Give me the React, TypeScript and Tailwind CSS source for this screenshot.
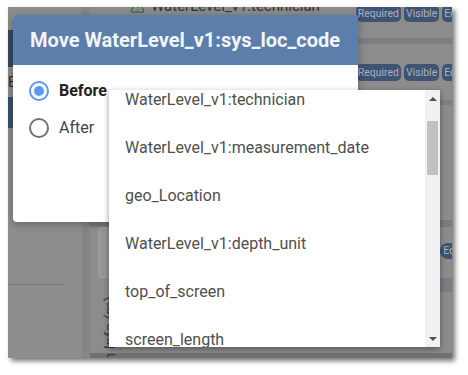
import { TriangleAlert } from "lucide-react";

const items = [
  "WaterLevel_v1:technician",
  "WaterLevel_v1:measurement_date",
  "geo_Location",
  "WaterLevel_v1:depth_unit",
  "top_of_screen",
  "screen_length",
];

function Badges() {
  return (
    <div className="-mr-[12px] flex gap-[3px] text-[10.5px] text-[#a6b2c2]">
      <span className="flex h-[17px] items-center rounded-[5px] bg-[#3f5473] px-[2px]">Required</span>
      <span className="flex h-[17px] items-center rounded-[5px] bg-[#3f5473] px-[2px]">Visible</span>
      <span className="flex h-[17px] items-center rounded-l-[5px] bg-[#3f5473] px-[2px]">Edit</span>
    </div>
  );
}

function Radio({ checked, label }: { checked?: boolean; label: string }) {
  return (
    <div className="flex items-center gap-[10px]">
      <span
        className={
          checked
            ? "flex h-[20px] w-[20px] items-center justify-center rounded-full border-2 border-[#5b97f5]"
            : "h-[20px] w-[20px] rounded-full border-2 border-[#737373]"
        }
      >
        {checked && <span className="h-[10px] w-[10px] rounded-full bg-[#5b97f5]" />}
      </span>
      <span className={checked ? "text-[16px] font-bold text-[#222]" : "text-[16px] text-[#444]"}>
        {label}
      </span>
    </div>
  );
}

export default function App() {
  return (
    <div className="h-[375px] w-[468px] bg-white pl-[8px] pt-[7px] font-['Roboto',sans-serif]">
      <div className="relative h-[351px] w-[444px] overflow-hidden bg-[#8c8c8c] shadow-[3px_3px_5px_rgba(0,0,0,0.55)]">
        {/* app underneath the overlay */}
        <div className="flex h-full">
          <div className="flex w-[74px] flex-col bg-[#8d8d8d]">
            <div className="h-[23px]" />
            <div className="h-[37px] bg-[#344862]" />
            <div className="flex h-[30px] items-center text-[14px] text-[#2c2c2c]">E</div>
            <div className="h-[31px] bg-[#3a4f6b]" />
            <div className="h-[156px]" />
            <div className="h-px w-[56px] bg-[#7a7a7a]" />
          </div>
          <div className="w-[8px] bg-[#858585]" />
          <div className="flex flex-1 flex-col">
            <div className="flex h-[31px] items-start">
              <div className="-mt-[12px] ml-[40px] flex items-center gap-[6px] text-[15px] text-[#333]">
                <TriangleAlert size={15} className="text-[#2e6a47]" />
                <span>WaterLevel_v1:technician</span>
              </div>
              <div className="-mt-[2px] ml-auto">
                <Badges />
              </div>
            </div>
            <div className="h-[6px] bg-[#7b7e83]" />
            <div className="flex h-[37px] items-end justify-end">
              <Badges />
            </div>
            <div className="h-[19px]" />
            <div className="h-[5px] bg-[#7d8084]" />
            <div className="h-[115px]" />
            <div className="h-[7px] bg-[#7b7b7b]" />
            <div className="flex h-[51px] items-start justify-between pl-[8px]">
              <div className="h-[51px] w-[20px] rounded-[3px] border border-[#9e9e9e] bg-[#969696]" />
              <span className="-mr-[12px] mt-[16px] flex h-[16px] items-center rounded-l-[8px] bg-[#3f5473] px-[3px] text-[10.5px] text-[#a6b2c2]">
                Edit
              </span>
            </div>
            <div className="ml-[30px] h-[14px] bg-[#7a7e84]" />
            <div className="flex flex-1 items-end overflow-visible pl-[9px]">
              <span className="-mb-[30px] rotate-180 text-[15px] text-[#2c3a4c] [writing-mode:vertical-rl]">
                Plan Info (m)
              </span>
            </div>
            <div className="h-[5px] bg-[#707070]" />
          </div>
        </div>

        {/* move dialog */}
        <div className="absolute left-[5px] top-[8px] h-[207px] w-[345px] overflow-hidden rounded-[4px] bg-white shadow-[0_2px_8px_rgba(0,0,0,0.3)]">
          <div className="flex h-[50px] items-center bg-[#5b7eab] pl-[17px] text-[20px] font-bold text-[#f2f4f7]">
            Move WaterLevel_v1:sys_loc_code
          </div>
          <div className="flex flex-col gap-[13px] pl-[16px] pt-[14px]">
            <Radio checked label="Before" />
            <Radio label="After" />
          </div>
        </div>

        {/* open select list */}
        <div className="absolute left-[101px] top-[83px] flex h-[257px] w-[331px] bg-white shadow-[0_2px_6px_rgba(0,0,0,0.4)]">
          <div className="flex-1 overflow-hidden">
            <div className="-mt-[14px]">
              {items.map((item) => (
                <div key={item} className="flex h-[48px] items-center pl-[16px] text-[16px] text-[#4f4f4f]">
                  {item}
                </div>
              ))}
            </div>
          </div>
          <div className="flex w-[15px] flex-col bg-[#f1f1f1]">
            <div className="flex h-[17px] items-center justify-center">
              <span className="h-0 w-0 border-x-[4px] border-b-[4px] border-x-transparent border-b-[#505050]" />
            </div>
            <div className="h-[14px]" />
            <div className="mx-auto h-[54px] w-[11px] bg-[#c1c1c1]" />
            <div className="flex-1" />
            <div className="flex h-[17px] items-center justify-center">
              <span className="h-0 w-0 border-x-[4px] border-t-[4px] border-x-transparent border-t-[#505050]" />
            </div>
          </div>
        </div>
      </div>
    </div>
  );
}
